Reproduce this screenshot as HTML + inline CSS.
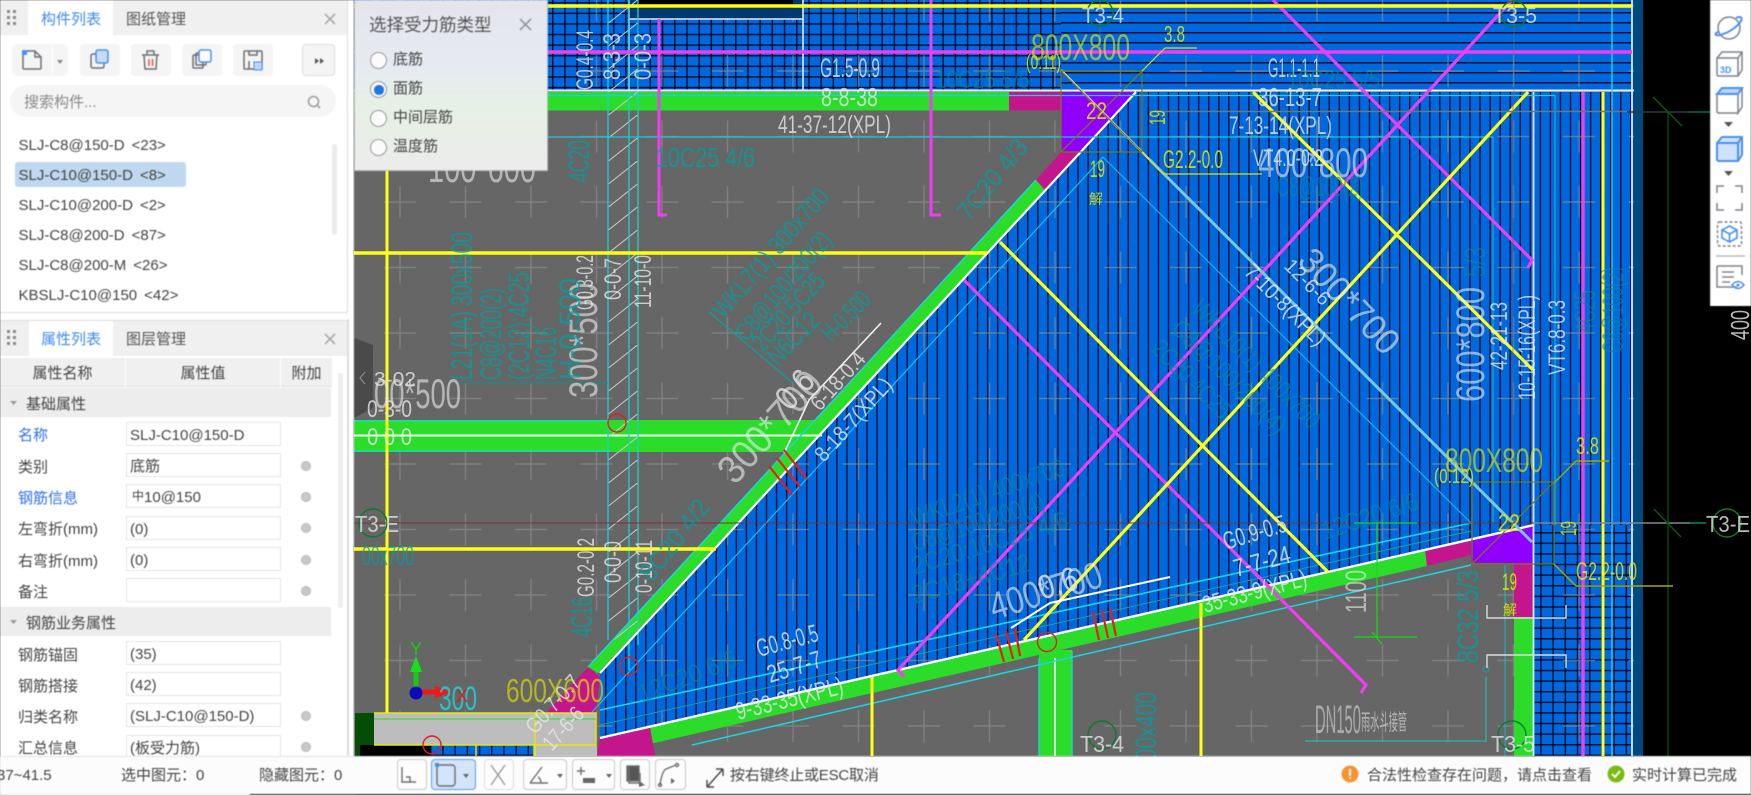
<!DOCTYPE html>
<html lang="zh"><head><meta charset="utf-8"><title>构件列表</title>
<style>
html,body{margin:0;padding:0;width:1751px;height:795px;overflow:hidden;background:#fff}
body{position:relative;font-family:"Liberation Sans","Noto Sans CJK SC",sans-serif;font-size:15px;color:#444}
#cad{position:absolute;left:0;top:0;filter:blur(.35px)}
#cad text{font-family:"Liberation Sans","Noto Sans CJK SC",sans-serif}
.w{fill:#e6e6e6;fill-opacity:.8}.y{fill:#e8e800;fill-opacity:.85}.t{fill:#00a0a0;fill-opacity:.75}.u{fill:#0a8a9a;fill-opacity:.6}
.big{fill-opacity:.62}
.ui{position:absolute;filter:blur(.4px)}
.a{position:absolute;white-space:nowrap;line-height:20px}
.tab{background:#f0f0f0}
.btn{position:absolute;top:44px;height:32px;background:#f5f5f5;border-radius:4px}
.lab{position:absolute;left:18px;line-height:20px;white-space:nowrap;transform:translateY(2px)}
.inp{position:absolute;left:126px;width:150px;height:22px;border:1.5px solid #e4e4e4;line-height:26px;padding-left:3px;background:#fff;white-space:nowrap;overflow:hidden}
.dot{position:absolute;left:301px;width:8px;height:8px;border-radius:50%;background:#c8c8c8;border:1px solid #b8b8b8;transform:translateY(1px)}
.grp{position:absolute;left:0;width:331px;height:29px;background:#ededed;line-height:33px;overflow:hidden}
.li{position:absolute;left:18.5px;line-height:20px;white-space:nowrap;transform:translateY(1px)}
.li b{font-weight:400;margin-left:7px}
.radio{position:absolute;left:370px;width:15px;height:15px;border:1.5px solid #9a9a9a;border-radius:50%;background:#fbfbfb}
.sb{position:absolute;top:759px;height:29px;border:1.5px solid #c9c9c9;border-radius:4px;background:#fdfdfd}
.th{position:absolute;top:358px;height:29px;background:#f0f0f0;text-align:center;line-height:32px;border-bottom:1px solid #ddd;box-sizing:border-box;overflow:hidden}
</style></head><body>
<svg id="cad" width="1751" height="795" viewBox="0 0 1751 795" xmlns="http://www.w3.org/2000/svg">
<defs>
<pattern id="vl" x="2" y="0" width="10.05" height="20" patternUnits="userSpaceOnUse"><rect width="1.4" height="20" fill="#02102c"/></pattern>
<pattern id="gr" x="3" y="2" width="12.2" height="10.6" patternUnits="userSpaceOnUse"><rect width="1.5" height="10.6" fill="#02102c"/><rect width="12.2" height="1.5" fill="#02102c"/></pattern>
<pattern id="hl" x="0" y="2" width="20" height="10" patternUnits="userSpaceOnUse"><rect width="20" height="1.5" fill="#02102c"/></pattern>
<pattern id="hatch" x="608" y="0" width="30" height="23" patternUnits="userSpaceOnUse"><path d="M-2 25L32-2" stroke="#c9c9c9" stroke-width="1" fill="none"/></pattern>
<pattern id="plus" x="-25.75" y="-27.25" width="65.5" height="65.5" patternUnits="userSpaceOnUse"><path d="M16.75 32.75h32M32.75 16.75v32" stroke="#8c8c8c" stroke-width="1.4" opacity=".65" fill="none"/></pattern>
</defs>
<rect width="1751" height="795" fill="#000"/>
<!-- base fills -->
<rect x="354" y="0" width="1280" height="756" fill="#666"/>
<rect x="354" y="0" width="1279" height="90" fill="#0068df"/>
<rect x="354" y="0" width="707" height="90" fill="url(#gr)"/>
<rect x="1061" y="0" width="572" height="90" fill="url(#hl)"/>
<rect x="1534" y="92" width="99" height="433" fill="#0068df"/>
<rect x="1534" y="92" width="99" height="433" fill="url(#vl)"/>
<rect x="1534" y="525" width="99" height="231" fill="#0068df"/>
<rect x="1534" y="525" width="99" height="231" fill="url(#gr)"/>
<rect x="1633" y="0" width="10" height="756" fill="#00497f"/>
<polygon points="1136,92 1534,92 1534,525 600,738 600,673" fill="#0068df"/>
<polygon points="1136,92 1534,92 1534,525 600,738 600,673" fill="url(#vl)"/>
<rect x="354" y="0" width="1280" height="756" fill="url(#plus)"/>
<!-- top box -->
<rect x="629" y="0" width="174" height="19" fill="#00396f"/><rect x="638" y="0" width="155" height="8" fill="#000"/>
<path d="M629 0V19H803V0" fill="none" stroke="#e8e8f0" stroke-width="1.6"/><path d="M629 19V90M803 19V90" stroke="#e8e8f0" stroke-width="1.6"/>
<!-- green bands -->
<rect x="354" y="92" width="655" height="18.5" fill="#2bdc2b"/>
<rect x="1009" y="92" width="52" height="18.5" fill="#c4168c"/>
<polygon points="1061,92 1136,92 1080,152 1061,152" fill="#8f00ff"/>
<polygon points="1061,152 1080,152 1045,190 1036,180" fill="#c4168c"/>
<polygon points="1036,180 1045,190 598,673 588,667" fill="#2bdc2b"/>
<polygon points="588,667 600,677 596,713 546,713" fill="#c4168c"/>
<polygon points="354,420 815,420 786,452 354,452" fill="#2bdc2b"/>
<path d="M354 421H608M354 451H610" stroke="#18e0b0" stroke-width="1.6"/>
<path d="M354 435.5H822" stroke="#e8ffe8" stroke-width="2"/>
<polygon points="650,726.6 1425,549.5 1427,566 650,744" fill="#2bdc2b"/>
<polygon points="1425,549.5 1471,539 1471,555 1427,566" fill="#c4168c"/>
<polygon points="600,738 650,726.6 655,756 597,756" fill="#c4168c"/>
<polygon points="1471,539 1534,525 1534,563 1471,563" fill="#8f00ff"/>
<rect x="1514" y="563" width="19" height="54" fill="#c4168c"/>
<rect x="1514" y="617" width="19" height="139" fill="#2bdc2b"/>
<rect x="1039" y="650" width="33" height="106" fill="#2bdc2b"/>
<path d="M1039 658V756M1072 651V756" stroke="#16d8c8" stroke-width="1.4"/><path d="M1055 658V756" stroke="#f0fff0" stroke-width="1.8"/>
<!-- bottom-left block -->
<rect x="355" y="713" width="19" height="43" fill="#044d04"/>
<rect x="360" y="745" width="71" height="11" fill="#000"/>
<rect x="431" y="745" width="103" height="11" fill="#0068df"/><rect x="431" y="745" width="103" height="11" fill="url(#gr)"/>
<rect x="534" y="745" width="63" height="11" fill="#bdbdbd"/>
<rect x="374" y="713" width="222" height="32" fill="#bdbdbd"/>
<path d="M374 713H596V745M374 745H596M535 713V756M476 745V756M534 745V756" fill="none" stroke="#e8e800" stroke-width="1.4"/>
<path d="M374 719H596" stroke="#2cdc2c" stroke-width="1"/>
<!-- hatch column -->
<rect x="608" y="0" width="30" height="640" fill="url(#hatch)"/>
<path d="M608 0V640M629 0V670M638 0V645" stroke="#1ccfcf" stroke-width="1.3" fill="none"/>
<!-- white edges -->
<path d="M354 90.5H1634" stroke="#e8ecf4" stroke-width="2"/>
<path d="M1136 92L600 673" stroke="#fff" stroke-width="2.2"/>
<path d="M600 738L1534 525" stroke="#fff" stroke-width="2.4"/>
<path d="M1533.5 92V756M1632 0V756" stroke="#d8e8ff" stroke-width="1.8"/>
<!-- cyan / teal thin -->
<path d="M1036 180L588 667" stroke="#18d8d8" stroke-width="1.5"/>
<path d="M354 137H1493" stroke="#16c8e0" stroke-width="1.2" fill="none"/>
<path d="M354 95.5H1555" stroke="#14d0e8" stroke-width="1.2"/>
<path d="M1103 157L592 712" stroke="#10c4f0" stroke-width="1.2"/>
<path d="M1103 157L1471 523" stroke="#10b4f0" stroke-width="1.2"/>
<path d="M600 710L1471 523" stroke="#14d8f0" stroke-width="1.6"/>
<path d="M600 725L1471 531" stroke="#18a0a0" stroke-width="1"/>
<path d="M692 745L1471 565" stroke="#18d8e0" stroke-width="1.5"/>
<path d="M1555 95V525M1493 137V523M1612 0V756M1584 525V756M1505 565V756" stroke="#16b4c0" stroke-width="1.1" fill="none"/>
<path d="M1612 0V756" stroke="#12e0f0" stroke-width="1.3"/>
<path d="M455 383H608" stroke="#149090" stroke-width="1"/>
<path d="M1305 741H1486V677" stroke="#18c0a8" stroke-width="1.2" fill="none"/>
<circle cx="1486" cy="669" r="3" fill="none" stroke="#18a0a0"/>
<path d="M709 312L793 383" stroke="#10a0a0" stroke-width="1.2"/>
<!-- magenta -->
<path d="M354 52H1632" stroke="#f23cf2" stroke-width="3.4"/>
<path d="M659 19V215H667M931 0V215H941" fill="none" stroke="#f23cf2" stroke-width="3"/>
<path d="M1512 0L898 670L904 677" fill="none" stroke="#f23cf2" stroke-width="3.2"/>
<path d="M1273 0L1532 260L1528 268" fill="none" stroke="#f23cf2" stroke-width="3.2"/>
<path d="M964 280L1366 685L1361 693" fill="none" stroke="#f23cf2" stroke-width="3.2"/>
<path d="M1583 92V756" stroke="#f23cf2" stroke-width="3.4"/>
<!-- yellow -->
<path d="M354 6H1632M354 253H987M354 549H716" stroke="#ffff18" stroke-width="3.4"/>
<path d="M387 152V713M1201 603V756M872 677V756M1603 92V756" stroke="#ffff18" stroke-width="3"/>
<path d="M1253 92L1533 370M1000 242L1328 572M1528 92L1024 640" stroke="#ffff18" stroke-width="3.2" fill="none"/>
<!-- light blue diag -->
<path d="M1061 70L1150 160" stroke="#cfcfcf" stroke-width="2.2"/>
<path d="M1150 160L1532 542" stroke="#78c8dc" stroke-width="3"/>
<!-- axis lines -->
<path d="M354 523H1534" stroke="#7a3038" stroke-width="1"/>
<path d="M1534 523H1690" stroke="#808890" stroke-width="1.4"/><path d="M1690 523H1706" stroke="#109070" stroke-width="1.4"/>
<path d="M1150 111.5H1627" stroke="#757575" stroke-width="1.6"/><path d="M1627 112H1688" stroke="#2a3a44" stroke-width="1.6"/><path d="M1688 112H1712" stroke="#0a6a3a" stroke-width="1.6"/>
<path d="M1668 112V795" stroke="#0a4a0a" stroke-width="1.4"/>
<path d="M1653 97L1682 126M1654 509L1681 537" stroke="#0a5a0a" stroke-width="1.4"/>
<path d="M1514 0V96M1100 0V60" stroke="#6a7a8a" stroke-width="1" opacity=".6"/>
<path d="M1513 92V520" stroke="#667" stroke-width="1.2" opacity=".5"/>
<!-- olive boxes -->
<path d="M1061 71H1142V152H1061ZM1061 71L1142 152M1142 71L1061 152" fill="none" stroke="#7a7a10" stroke-width="1.2"/>
<path d="M1472 482H1554V564H1472ZM1472 564L1554 482" fill="none" stroke="#7a7a10" stroke-width="1.2"/>
<path d="M1165 48H1197M1165 48L1142 71M1163 174H1262M1142 152L1163 174" stroke="#e0e000" stroke-width="1.2" fill="none"/>
<path d="M1576 461H1609M1555 482L1576 461M1576 586H1673M1554 564L1576 586" stroke="#a8a800" stroke-width="1.4" fill="none"/>
<!-- green dimension -->
<path d="M1354 523H1417M1354 637H1417M1377 523V637M1372 632L1382 644" stroke="#18d818" stroke-width="1.3" fill="none"/>
<!-- white brackets & leaders -->
<path d="M1487 605V618H1566V605M1487 668V655H1566V668" fill="none" stroke="#dcdcdc" stroke-width="1.4"/>
<path d="M881 323L809 400Q800 420 784 453" fill="none" stroke="#f0f0f0" stroke-width="1.6"/>
<path d="M1170 577L1050 603L1011 628" fill="none" stroke="#fff" stroke-width="2"/>
<!-- red -->
<path d="M772 468L795 497M780 460L803 489M787 452L810 481" stroke="#f01818" stroke-width="2.2" transform="translate(-3,-2)"/>
<path d="M996 634L1004 662M1006 631L1013 659M1015 628L1020 656" stroke="#f01818" stroke-width="2.2"/>
<path d="M1093 612L1099 640M1102 610L1108 638M1110 608L1116 636" stroke="#f01818" stroke-width="2.2"/>
<g fill="none" stroke="#e02020" stroke-width="1.4"><circle cx="617" cy="423" r="9"/><circle cx="629" cy="666" r="9"/><circle cx="432" cy="745" r="9"/><circle cx="1047" cy="642" r="9.5"/></g>
<!-- hex markers -->
<g fill="none" stroke="#0b7a2a" stroke-width="1.4"><circle cx="1100" cy="13" r="13"/><circle cx="1514" cy="14" r="13"/><circle cx="373" cy="523" r="14"/><circle cx="1727" cy="523" r="14"/><circle cx="1102" cy="735" r="14"/><circle cx="1512" cy="735" r="14"/></g>
<!-- handle -->
<polygon points="354,338 373,345 373,408 354,418" fill="#4a4a4a"/>
<path d="M365 372L360 378L365 384" fill="none" stroke="#8a8a8a" stroke-width="1.2"/>
<!-- axis gizmo -->
<path d="M416 690V670" stroke="#18c818" stroke-width="5"/><polygon points="416,656 410,672 422,672" fill="#18e018"/>
<path d="M416 692H437" stroke="#f01818" stroke-width="5"/><polygon points="452,692 435,686 435,698" fill="#f01818"/>
<circle cx="416" cy="693" r="6.5" fill="#0a0ab8"/>
<g>
<!-- horizontal white -->
<text class="w" x="820" y="77" font-size="27" textLength="60" lengthAdjust="spacingAndGlyphs">G1.5-0.9</text>
<text class="w" x="821" y="106" font-size="26" textLength="57" lengthAdjust="spacingAndGlyphs">8-8-38</text>
<text class="w" x="778" y="133" font-size="25" textLength="113" lengthAdjust="spacingAndGlyphs">41-37-12(XPL)</text>
<text class="w" x="1082" y="23" font-size="22" textLength="42" lengthAdjust="spacingAndGlyphs">T3-4</text>
<text class="w" x="1493" y="23" font-size="22" textLength="44" lengthAdjust="spacingAndGlyphs">T3-5</text>
<text class="w" x="1268" y="77" font-size="27" textLength="52" lengthAdjust="spacingAndGlyphs">G1.1-1.1</text>
<text class="w" x="1258" y="106" font-size="26" textLength="64" lengthAdjust="spacingAndGlyphs">36-13-7</text>
<text class="w" x="1229" y="134" font-size="25" textLength="103" lengthAdjust="spacingAndGlyphs">7-13-14(XPL)</text>
<text class="w" x="1253" y="166" font-size="24" textLength="70" lengthAdjust="spacingAndGlyphs">VT4.0-0.2</text>
<text class="w big" x="1258" y="177" font-size="42" textLength="110" lengthAdjust="spacingAndGlyphs">400*800</text>
<text class="w big" x="428" y="182" font-size="42" textLength="108" lengthAdjust="spacingAndGlyphs">100*600</text>
<text class="w big" x="374" y="408" font-size="42" textLength="87" lengthAdjust="spacingAndGlyphs">00*500</text>
<text class="w" x="374" y="386" font-size="20" textLength="42" lengthAdjust="spacingAndGlyphs">3-02</text>
<text class="w" x="367" y="417" font-size="24" textLength="45" lengthAdjust="spacingAndGlyphs">0-3-0</text>
<text class="w" x="367" y="445" font-size="24" textLength="45" lengthAdjust="spacingAndGlyphs">0 0 0</text>
<text class="w" x="355" y="532" font-size="23" textLength="44" lengthAdjust="spacingAndGlyphs">T3-E</text>
<text class="w" x="1706" y="532" font-size="23" textLength="44" lengthAdjust="spacingAndGlyphs">T3-E</text>
<text class="w" x="1080" y="752" font-size="23" textLength="44" lengthAdjust="spacingAndGlyphs">T3-4</text>
<text class="w" x="1491" y="752" font-size="23" textLength="44" lengthAdjust="spacingAndGlyphs">T3-5</text>
<text x="1315" y="733" font-size="40" textLength="46" lengthAdjust="spacingAndGlyphs" fill="#c8c8c8" fill-opacity=".7">DN150</text>
<text x="1361" y="730" font-size="22" textLength="46" lengthAdjust="spacingAndGlyphs" fill="#c8c8c8" fill-opacity=".8">雨水斗接管</text>
<!-- horizontal yellow -->
<text class="y big" x="1031" y="60" font-size="37" textLength="99" lengthAdjust="spacingAndGlyphs">800X800</text>
<text class="y" x="1026" y="69" font-size="20" textLength="35" lengthAdjust="spacingAndGlyphs">(0.11)</text>
<text class="y" x="1164" y="42" font-size="23" textLength="21" lengthAdjust="spacingAndGlyphs">3.8</text>
<text class="y" x="1163" y="168" font-size="25" textLength="60" lengthAdjust="spacingAndGlyphs">G2.2-0.0</text>
<text class="y" x="1086" y="119" font-size="24" textLength="21" lengthAdjust="spacingAndGlyphs">22</text>
<text class="y" x="1090" y="177" font-size="24" textLength="15" lengthAdjust="spacingAndGlyphs">19</text>
<text class="y" x="1089" y="204" font-size="14">解</text>
<text class="y big" x="1445" y="472" font-size="34" textLength="98" lengthAdjust="spacingAndGlyphs">800X800</text>
<text class="y" x="1434" y="483" font-size="20" textLength="40" lengthAdjust="spacingAndGlyphs">(0.12)</text>
<text class="y" x="1576" y="454" font-size="24" textLength="23" lengthAdjust="spacingAndGlyphs">3.8</text>
<text class="y" x="1576" y="580" font-size="25" textLength="61" lengthAdjust="spacingAndGlyphs">G2.2-0.0</text>
<text class="y" x="1498" y="531" font-size="24" textLength="22" lengthAdjust="spacingAndGlyphs">22</text>
<text class="y" x="1502" y="590" font-size="24" textLength="15" lengthAdjust="spacingAndGlyphs">19</text>
<text class="y" x="1503" y="615" font-size="14">解</text>
<text x="506" y="702" font-size="33" textLength="98" lengthAdjust="spacingAndGlyphs" fill="#d8d800" fill-opacity=".7">600X600</text>
<text x="439" y="710" font-size="34" textLength="38" lengthAdjust="spacingAndGlyphs" fill="#18d8e0" fill-opacity=".8">300</text>
<text x="456" y="702" font-size="18" fill="#e81818">X</text>
<text x="410" y="655" font-size="18" fill="#18c818">Y</text>
<!-- horizontal teal -->
<text class="t" x="656" y="167" font-size="28" textLength="99" lengthAdjust="spacingAndGlyphs">10C25 4/6</text>
<text class="u" x="935" y="88" font-size="25" textLength="95" lengthAdjust="spacingAndGlyphs">10C25 5/5</text>
<text class="u" x="1287" y="88" font-size="25" textLength="93" lengthAdjust="spacingAndGlyphs">10C25 5/5</text>
<text class="u" x="1277" y="196" font-size="28" textLength="86" lengthAdjust="spacingAndGlyphs">C8@100(2)</text>
<!-- rotated -90 -->
<g class="w" font-size="24">
<text transform="translate(593,90) rotate(-90)" textLength="60" lengthAdjust="spacingAndGlyphs">G0.4-0.4</text>
<text transform="translate(620,80) rotate(-90)" textLength="47" lengthAdjust="spacingAndGlyphs">8-3-3</text>
<text transform="translate(651,80) rotate(-90)" textLength="47" lengthAdjust="spacingAndGlyphs">0-0-3</text>
<text transform="translate(593,310) rotate(-90)" textLength="55" lengthAdjust="spacingAndGlyphs">G0.3-0.2</text>
<text transform="translate(621,300) rotate(-90)" textLength="42" lengthAdjust="spacingAndGlyphs">0-0-7</text>
<text transform="translate(651,308) rotate(-90)" textLength="53" lengthAdjust="spacingAndGlyphs">11-10-0</text>
<text transform="translate(594,597) rotate(-90)" textLength="59" lengthAdjust="spacingAndGlyphs">G0.2-0.2</text>
<text transform="translate(621,583) rotate(-90)" textLength="42" lengthAdjust="spacingAndGlyphs">0-0-0</text>
<text transform="translate(652,593) rotate(-90)" textLength="53" lengthAdjust="spacingAndGlyphs">0-10-11</text>
<text transform="translate(1507,370) rotate(-90)" textLength="68" lengthAdjust="spacingAndGlyphs">42-21-13</text>
<text transform="translate(1535,400) rotate(-90)" textLength="105" lengthAdjust="spacingAndGlyphs">10-15-16(XPL)</text>
<text transform="translate(1565,375) rotate(-90)" textLength="75" lengthAdjust="spacingAndGlyphs">VT6.8-0.3</text>
<text class="big" transform="translate(597,398) rotate(-90)" font-size="40" textLength="115" lengthAdjust="spacingAndGlyphs">300*500</text>
<text class="big" transform="translate(1484,402) rotate(-90)" font-size="40" textLength="115" lengthAdjust="spacingAndGlyphs">600*800</text>
<text class="big" transform="translate(1366,613) rotate(-90)" font-size="30" textLength="43" lengthAdjust="spacingAndGlyphs">1100</text>
<text transform="translate(1749,340) rotate(-90)" font-size="26" textLength="30" lengthAdjust="spacingAndGlyphs">400</text>
</g>
<g class="t" font-size="30">
<text transform="translate(472,380) rotate(-90)" textLength="148" lengthAdjust="spacingAndGlyphs">L21(1A) 300x500</text>
<text transform="translate(501,380) rotate(-90)" textLength="92" lengthAdjust="spacingAndGlyphs">C8@200(2)</text>
<text transform="translate(529,380) rotate(-90)" textLength="108" lengthAdjust="spacingAndGlyphs">(2C12);4C25</text>
<text transform="translate(556,380) rotate(-90)" textLength="53" lengthAdjust="spacingAndGlyphs">N4C16</text>
<text transform="translate(580,380) rotate(-90)" textLength="102" lengthAdjust="spacingAndGlyphs">H-0.500</text>
<text transform="translate(589,182) rotate(-90)" textLength="42" lengthAdjust="spacingAndGlyphs">4C20</text>
<text transform="translate(592,637) rotate(-90)" textLength="40" lengthAdjust="spacingAndGlyphs">4C16</text>
<text transform="translate(1478,663) rotate(-90)" textLength="93" lengthAdjust="spacingAndGlyphs">8C32 5/3</text>
<text transform="translate(1156,772) rotate(-90)" textLength="80" lengthAdjust="spacingAndGlyphs">300x400</text>
</g>
<g class="u" font-size="30">
<text transform="translate(1485,277) rotate(-90)" textLength="30" lengthAdjust="spacingAndGlyphs">5/3</text>
<text transform="translate(1595,333) rotate(-90)" textLength="43" lengthAdjust="spacingAndGlyphs">4C25</text>
<text transform="translate(1623,353) rotate(-90)" textLength="86" lengthAdjust="spacingAndGlyphs">C8@100(2)</text>
</g>
<text class="t" font-size="28" transform="translate(362,565)" textLength="52" lengthAdjust="spacingAndGlyphs">00x700</text>
<text class="y" font-size="22" transform="translate(1165,125) rotate(-90)" textLength="15" lengthAdjust="spacingAndGlyphs">19</text>
<text class="y" font-size="22" transform="translate(1576,536) rotate(-90)" textLength="15" lengthAdjust="spacingAndGlyphs">19</text>
<!-- angled teal -->
<g class="t" font-size="26">
<text transform="translate(969,222) rotate(-51)" textLength="96" lengthAdjust="spacingAndGlyphs">7C20 4/3</text>
<text transform="translate(652,583) rotate(-52)" textLength="96" lengthAdjust="spacingAndGlyphs">8C20 4/2</text>
<text transform="translate(724,320) rotate(-49)" textLength="162" lengthAdjust="spacingAndGlyphs">WKL7(1) 300x700</text>
<text transform="translate(747,343) rotate(-50)" textLength="134" lengthAdjust="spacingAndGlyphs">C8@100/200(2)</text>
<text transform="translate(763,353) rotate(-48)" textLength="95" lengthAdjust="spacingAndGlyphs">2C20;5C25</text>
<text transform="translate(778,367) rotate(-46)" textLength="62" lengthAdjust="spacingAndGlyphs">N6C12</text>
<text transform="translate(832,343) rotate(-46)" textLength="58" lengthAdjust="spacingAndGlyphs">H-0.500</text>
</g>
<g class="u" font-size="26">
<text transform="translate(642,703) rotate(-21)" textLength="104" lengthAdjust="spacingAndGlyphs">12C20 6/6</text>
<text transform="translate(1325,540) rotate(-18)" textLength="100" lengthAdjust="spacingAndGlyphs">12C20 6/6</text>
<text transform="translate(915,527) rotate(-19)" textLength="160" lengthAdjust="spacingAndGlyphs">WKL2(1) 400x700</text>
<text transform="translate(915,552) rotate(-18)" textLength="138" lengthAdjust="spacingAndGlyphs">C8@100/200(4)</text>
<text transform="translate(915,575) rotate(-17)" textLength="162" lengthAdjust="spacingAndGlyphs">2C20;10C25 4/6</text>
<text transform="translate(915,604) rotate(-16)" textLength="122" lengthAdjust="spacingAndGlyphs">2C18+4C12</text>
<text transform="translate(1190,310) rotate(45)" textLength="170" lengthAdjust="spacingAndGlyphs">WKL10(1) 400x700</text>
<text transform="translate(1170,330) rotate(45)" textLength="150" lengthAdjust="spacingAndGlyphs">C8@100/200(4)</text>
<text transform="translate(1150,350) rotate(45)" textLength="100" lengthAdjust="spacingAndGlyphs">2C20;4C25</text>
</g>
<!-- angled white -->
<g class="w" font-size="25">
<text class="big" transform="translate(735,486) rotate(-48)" font-size="40" textLength="135" lengthAdjust="spacingAndGlyphs">300*700</text>
<text transform="translate(820,412) rotate(-48)" font-size="22" textLength="70" lengthAdjust="spacingAndGlyphs">6-18-0.4</text>
<text transform="translate(824,463) rotate(-48)" font-size="22" textLength="104" lengthAdjust="spacingAndGlyphs">8-18-7(XPL)</text>
<text transform="translate(790,412) rotate(-48)" font-size="34" textLength="40" lengthAdjust="spacingAndGlyphs">0.6</text>
<text transform="translate(759,657) rotate(-15)" textLength="63" lengthAdjust="spacingAndGlyphs">G0.8-0.5</text>
<text transform="translate(770,683) rotate(-17)" textLength="56" lengthAdjust="spacingAndGlyphs">25-7-7</text>
<text transform="translate(738,720) rotate(-14)" textLength="110" lengthAdjust="spacingAndGlyphs">9-33-35(XPL)</text>
<text class="big" transform="translate(994,620) rotate(-17)" font-size="38" textLength="116" lengthAdjust="spacingAndGlyphs">400*700</text>
<text transform="translate(1042,600) rotate(-17)" font-size="34" textLength="40" lengthAdjust="spacingAndGlyphs">0.6</text>
<text transform="translate(1226,550) rotate(-17)" textLength="65" lengthAdjust="spacingAndGlyphs">G0.9-0.5</text>
<text transform="translate(1236,577) rotate(-15)" textLength="58" lengthAdjust="spacingAndGlyphs">7-7-24</text>
<text transform="translate(1205,613) rotate(-15)" font-size="24" textLength="107" lengthAdjust="spacingAndGlyphs">35-33-9(XPL)</text>
<text class="big" transform="translate(1296,262) rotate(47)" font-size="36" textLength="130" lengthAdjust="spacingAndGlyphs">300*700</text>
<text transform="translate(1283,267) rotate(45)" font-size="20" textLength="56" lengthAdjust="spacingAndGlyphs">12-6-6</text>
<text transform="translate(1243,273) rotate(45)" font-size="22" textLength="105" lengthAdjust="spacingAndGlyphs">7-10-8(XPL)</text>
<text transform="translate(535,735) rotate(-48)" font-size="22" textLength="70" lengthAdjust="spacingAndGlyphs">G0.7-0.7</text>
<text transform="translate(552,752) rotate(-48)" font-size="22" textLength="50" lengthAdjust="spacingAndGlyphs">17-6-6</text>
</g>
</g>
</svg>

<!-- left panel -->
<div class="ui" style="left:0;top:0;width:354px;height:795px;background:#fff">
 <div style="position:absolute;left:0;top:0;width:348px;height:313px;border-right:1.5px solid #ddd;border-bottom:1.5px solid #ddd;box-sizing:border-box"></div>
 <div class="tab" style="position:absolute;left:0;top:0;width:347px;height:35px"></div>
 <div style="position:absolute;left:28px;top:0;width:85px;height:35px;background:#fff"></div>
 <svg style="position:absolute;left:7px;top:10px" width="10" height="18"><g fill="#8a8a8a"><rect x="0" y="0" width="3" height="3"/><rect x="6" y="0" width="3" height="3"/><rect x="0" y="6" width="3" height="3"/><rect x="6" y="6" width="3" height="3"/><rect x="0" y="12" width="3" height="3"/><rect x="6" y="12" width="3" height="3"/></g></svg>
 <div class="a" style="left:41px;top:10px;color:#3d8bef">构件列表</div>
 <div class="a" style="left:126px;top:10px;color:#555">图纸管理</div>
 <svg style="position:absolute;left:324px;top:13px" width="12" height="12"><path d="M1 1L11 11M11 1L1 11" stroke="#aaa" stroke-width="1.6"/></svg>
 <!-- toolbar -->
 <div class="btn" style="left:12px;width:56px"></div>
 <div style="position:absolute;left:52px;top:44px;width:1px;height:32px;background:#fff"></div>
 <div class="btn" style="left:80px;width:40px"></div>
 <div class="btn" style="left:131px;width:40px"></div>
 <div class="btn" style="left:182px;width:40px"></div>
 <div class="btn" style="left:233px;width:40px"></div>
 <div class="btn" style="left:302px;width:33px;box-sizing:border-box;border:1px solid #dedede"></div>
 <svg style="position:absolute;left:0;top:40px" width="348" height="40" fill="none" stroke="#6c6f75" stroke-width="1.5">
  <path d="M24 11H35L41 17V28Q41 29 40 29H24Q23 29 23 28V12Z"/><path d="M35 11V17H41"/><rect x="22" y="10" width="5" height="5" fill="#4a90ee" stroke="none"/>
  <polygon points="57,20 63,20 60,24" fill="#888" stroke="none"/>
  <rect x="91" y="14" width="13" height="14" rx="2"/><rect x="96" y="10" width="12" height="13" rx="2" fill="#c7dbf7" stroke="#4a90ee"/>
  <path d="M142 15H159M147 15V11H154V15M144 15L145 29H156L157 15"/><path d="M149 19V26M152.5 19V26" stroke="#e0544a"/>
  <rect x="193" y="15" width="10" height="13" rx="1"/><rect x="196" y="13" width="10" height="12" rx="1"/><rect x="199" y="10" width="12" height="12" rx="2" fill="#fff" stroke="#4a90ee"/>
  <rect x="244" y="11" width="18" height="18" rx="1"/><path d="M249 11V15H257V11M249 29V21"/><rect x="254" y="22" width="8" height="8" fill="#bcd6f8" stroke="#4a90ee" stroke-width="1"/>
  <polygon points="315,18 319,21 315,24" fill="#555" stroke="none"/><polygon points="320,18 324,21 320,24" fill="#555" stroke="none"/>
 </svg>
 <!-- search -->
 <div style="position:absolute;left:10px;top:85px;width:326px;height:32px;border-radius:16px;background:#f5f5f5"></div>
 <div class="a" style="left:24px;top:93px;color:#8a8a8a">搜索构件...</div>
 <svg style="position:absolute;left:307px;top:95px" width="14" height="14" fill="none" stroke="#a0a0a0" stroke-width="1.6"><circle cx="6.5" cy="6.5" r="5"/><path d="M10 10L13 13"/></svg>
 <!-- list -->
 <div style="position:absolute;left:15px;top:162px;width:171px;height:25px;border-radius:3px;background:#bfd8f0"></div>
 <div class="li" style="top:135px">SLJ-C8@150-D<b>&lt;23&gt;</b></div>
 <div class="li" style="top:165px">SLJ-C10@150-D<b>&lt;8&gt;</b></div>
 <div class="li" style="top:195px">SLJ-C10@200-D<b>&lt;2&gt;</b></div>
 <div class="li" style="top:225px">SLJ-C8@200-D<b>&lt;87&gt;</b></div>
 <div class="li" style="top:255px">SLJ-C8@200-M<b>&lt;26&gt;</b></div>
 <div class="li" style="top:285px">KBSLJ-C10@150<b>&lt;42&gt;</b></div>
 <div style="position:absolute;left:332px;top:144px;width:5px;height:91px;background:#ececec;border-radius:3px"></div>

 <!-- second panel -->
 <div class="tab" style="position:absolute;left:0;top:320px;width:347px;height:36px;border-top:1px solid #ddd;box-sizing:border-box"></div>
 <div style="position:absolute;left:29px;top:321px;width:84px;height:35px;background:#fff"></div>
 <div style="position:absolute;left:347px;top:319px;width:1.5px;height:437px;background:#ddd"></div>
 <svg style="position:absolute;left:7px;top:330px" width="10" height="18"><g fill="#8a8a8a"><rect x="0" y="0" width="3" height="3"/><rect x="6" y="0" width="3" height="3"/><rect x="0" y="6" width="3" height="3"/><rect x="6" y="6" width="3" height="3"/><rect x="0" y="12" width="3" height="3"/><rect x="6" y="12" width="3" height="3"/></g></svg>
 <div class="a" style="left:41px;top:330px;color:#3d8bef">属性列表</div>
 <div class="a" style="left:126px;top:330px;color:#555">图层管理</div>
 <svg style="position:absolute;left:324px;top:333px" width="12" height="12"><path d="M1 1L11 11M11 1L1 11" stroke="#aaa" stroke-width="1.6"/></svg>
 <!-- table head -->
 <div class="th" style="left:0;width:125px">属性名称</div>
 <div class="th" style="left:126px;width:154px">属性值</div>
 <div class="th" style="left:281px;width:51px">附加</div>
 <div class="grp" style="top:388px"><svg style="position:absolute;left:10px;top:13px" width="8" height="5"><polygon points="0,0 7,0 3.5,4" fill="#999"/></svg><span style="position:absolute;left:26px">基础属性</span></div>
 <div class="lab" style="top:424px;color:#2f6fec">名称</div><div class="inp" style="top:422px">SLJ-C10@150-D</div>
 <div class="lab" style="top:456px">类别</div><div class="inp" style="top:453px">底筋</div><div class="dot" style="top:460px"></div>
 <div class="lab" style="top:487px;color:#2f6fec">钢筋信息</div><div class="inp" style="top:484px"><span style="font-size:12px;position:relative;top:-2px;margin-left:2px">中</span>10@150</div><div class="dot" style="top:491px"></div>
 <div class="lab" style="top:518px">左弯折(mm)</div><div class="inp" style="top:516px">(0)</div><div class="dot" style="top:522px"></div>
 <div class="lab" style="top:550px">右弯折(mm)</div><div class="inp" style="top:547px">(0)</div><div class="dot" style="top:554px"></div>
 <div class="lab" style="top:581px">备注</div><div class="inp" style="top:578px"></div><div class="dot" style="top:585px"></div>
 <div class="grp" style="top:607px"><svg style="position:absolute;left:10px;top:13px" width="8" height="5"><polygon points="0,0 7,0 3.5,4" fill="#999"/></svg><span style="position:absolute;left:26px">钢筋业务属性</span></div>
 <div class="lab" style="top:644px">钢筋锚固</div><div class="inp" style="top:641px">(35)</div>
 <div class="lab" style="top:675px">钢筋搭接</div><div class="inp" style="top:672px">(42)</div>
 <div class="lab" style="top:706px">归类名称</div><div class="inp" style="top:703px">(SLJ-C10@150-D)</div><div class="dot" style="top:710px"></div>
 <div class="lab" style="top:737px">汇总信息</div><div class="inp" style="top:735px">(板受力筋)</div><div class="dot" style="top:741px"></div>
 <div style="position:absolute;left:338px;top:373px;width:5px;height:235px;background:#eee;border-radius:3px"></div>
</div>

<!-- dialog -->
<div class="ui" style="left:354px;top:0;width:194px;height:171px;box-sizing:border-box;border:1px solid #bdbdbd;border-top:0;background:linear-gradient(180deg,#e4e6ec 0%,#e8eaf2 40%,#e6f1e6 62%,#eaeee8 78%,#ececec 100%)"></div>
<div class="ui" style="left:0;top:0;width:0;height:0">
 <div class="a" style="left:369px;top:15px;font-size:17.5px;color:#555">选择受力筋类型</div>
 <svg style="position:absolute;left:519px;top:18px" width="13" height="13"><path d="M1 1L12 12M12 1L1 12" stroke="#8a8a8a" stroke-width="1.4"/></svg>
 <div class="radio" style="top:52px"></div><div class="a" style="left:393px;top:50px">底筋</div>
 <div class="radio" style="top:81px"></div><div style="position:absolute;left:374px;top:85px;width:9.5px;height:9.5px;border-radius:50%;background:#1f74e6"></div><div class="a" style="left:393px;top:79px">面筋</div>
 <div class="radio" style="top:110px"></div><div class="a" style="left:393px;top:108px">中间层筋</div>
 <div class="radio" style="top:139px"></div><div class="a" style="left:393px;top:137px">温度筋</div>
</div>

<!-- right toolbar -->
<div class="ui" style="left:1710px;top:0;width:41px;height:306px;background:#fff;border-left:1px solid #ddd;box-sizing:border-box"></div>
<svg class="ui" style="left:1710px;top:0" width="41" height="306" fill="none" stroke="#7d828a" stroke-width="1.5">
 <circle cx="19" cy="28" r="11"/><path d="M8 32C3 34 6 37 13 34C20 32 28 26 31 21C33 17 30 16 26 18" stroke="#4a90ee" stroke-width="2"/>
 <path d="M7 58H28V76H9Q7 76 7 74ZM7 58L12 52H32V70L28 76M28 58L32 52"/><text x="10" y="73" font-size="9" font-weight="700" fill="#4a90ee" stroke="none" font-family="Liberation Sans">3D</text>
 <path d="M7 94H28V113H9Q7 113 7 111ZM28 94V113L32 107V88"/><path d="M7 94L12 88H32L28 94Z" stroke="#4a90ee" stroke-width="2" fill="#bcd6f8"/>
 <polygon points="14,122 23,122 18.5,127" fill="#555" stroke="none"/>
 <path d="M7 143H28V161H9Q7 161 7 159ZM7 143L12 137H32V155L28 161M28 143L32 137" stroke="#4a90ee" stroke-width="2" fill="#cfe2fb"/>
 <polygon points="14,171 23,171 18.5,176" fill="#555" stroke="none"/>
 <path d="M7 193V186H14M25 186H32V193M32 203V210H25M14 210H7V203"/>
 <rect x="7.5" y="222" width="24" height="24" rx="2" stroke-dasharray="3 2"/><path d="M19.5 226L27 230V238L19.5 242L12 238V230ZM12 230L19.5 234L27 230M19.5 234V242" stroke="#4a90ee" stroke-width="1.6"/>
 <path d="M6 256H35" stroke="#bbb"/>
 <path d="M7 266V287H27M7 266H32V275"/><path d="M12 272H24M12 277H24M12 282H20" stroke="#888"/>
 <path d="M22 285Q28 278 34 285Q28 292 22 285Z" stroke="#4a90ee"/><circle cx="28" cy="285" r="1.5" fill="#4a90ee" stroke="none"/>
</svg>

<!-- status bar -->
<div class="ui" style="left:0;top:755.5px;width:1751px;height:39.5px;background:#fcfcfc;border-top:1px solid #e4e4e4;box-sizing:border-box"></div>
<div class="ui" style="left:250px;top:794px;width:1501px;height:1px;background:#222"></div>
<div class="ui" style="left:0;top:0;width:0;height:0">
 <div class="a" style="left:-3px;top:766px">37~41.5</div>
 <div class="a" style="left:121px;top:766px">选中图元：0</div>
 <div class="a" style="left:259px;top:766px">隐藏图元：0</div>
 <div class="sb" style="left:397px;width:28px"></div>
 <div class="sb" style="left:431px;width:43px;background:#d3e4fb;border-color:#5b9bec"></div>
 <div class="sb" style="left:484px;width:28px;border-color:#ddd"></div>
 <div class="sb" style="left:523px;width:42px"></div>
 <div class="sb" style="left:572px;width:41px"></div>
 <div class="sb" style="left:620px;width:28px"></div>
 <div class="sb" style="left:655px;width:29px"></div>
 <svg style="position:absolute;left:390px;top:755px" width="340" height="40" fill="none" stroke="#6e6e6e" stroke-width="1.4">
  <path d="M12 12V27H26M16 22H20V27"/>
  <rect x="47" y="10" width="18" height="21" rx="3"/><rect x="45" y="8" width="4" height="4" fill="#4a90ee" stroke="none"/><polygon points="73,19 79,19 76,23" fill="#666" stroke="none"/>
  <path d="M101 10L115 30M115 10L101 30" stroke="#9a9a9a"/>
  <path d="M140 28L152 12M140 28H158M148 22Q151 24 151 28"/><polygon points="167,19 173,19 170,23" fill="#666" stroke="none"/>
  <path d="M191 12V20M187 16H195"/><rect x="193" y="23" width="12" height="5" fill="#666" stroke="none"/><polygon points="216,19 222,19 219,23" fill="#666" stroke="none"/>
  <rect x="237" y="11" width="12" height="15" fill="#555"/><path d="M239 11V28H250M250 18V28"/><polygon points="249,26 255,30 249,32" fill="#666" stroke="none"/>
  <path d="M270 30Q272 16 276 14L286 10"/><circle cx="270" cy="30" r="1.5"/><circle cx="287" cy="10" r="1.5"/><polygon points="281,23 285,26 281,29" fill="#666" stroke="none"/>
  <path d="M317 32L333 14M333 14H326M333 14V21M317 32H324M317 32V25" stroke="#444"/>
 </svg>
 <div class="a" style="left:730px;top:766px;letter-spacing:-.2px">按右键终止或ESC取消</div>
 <svg style="position:absolute;left:1341px;top:765px" width="18" height="18"><circle cx="9" cy="9" r="8.5" fill="#f79431"/><rect x="8" y="4" width="2" height="6.5" fill="#fff"/><rect x="8" y="12" width="2" height="2" fill="#fff"/></svg>
 <div class="a" style="left:1367px;top:766px">合法性检查存在问题，请点击查看</div>
 <svg style="position:absolute;left:1607px;top:765px" width="18" height="18"><circle cx="9" cy="9" r="8.5" fill="#7cbb14"/><path d="M5 9L8 12L13 6" fill="none" stroke="#fff" stroke-width="1.8"/></svg>
 <div class="a" style="left:1632px;top:766px">实时计算已完成</div>
</div>
</body></html>
